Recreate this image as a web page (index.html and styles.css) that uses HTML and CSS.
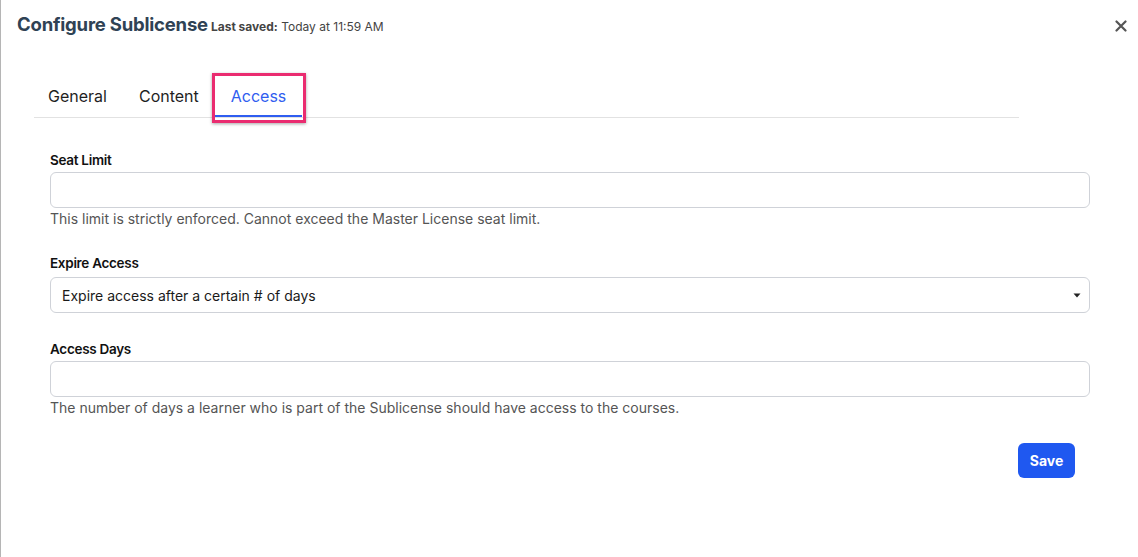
FILE: index.html
```html
<html lang="en">
<head>
  <meta charset="UTF-8" />
  <meta name="viewport" content="width=device-width, initial-scale=1.0"/>
  <title>Configure Sublicense</title>
  <link rel="stylesheet" href="styles.css">
</head>
<body>
  <div class="modal">
    <header class="modal-header">
      <h1>Configure Sublicense</h1>
      <span class="saved"><b>Last saved:</b> Today at 11:59 AM</span>
      <button type="button" class="close-btn" aria-label="Close">
        <svg width="12" height="12" viewBox="0 0 12 12"><path d="M1.5 1.5l9 9M10.5 1.5l-9 9" stroke="#555" stroke-width="2.2" stroke-linecap="round"/></svg>
      </button>
    </header>

    <nav class="tabs">
      <a class="tab">General</a>
      <a class="tab">Content</a>
      <a class="tab active">Access</a>
    </nav>

    <form class="access-form">
      <div class="field">
        <label for="seatLimit">Seat Limit</label>
        <input type="text" id="seatLimit" />
        <p class="help">This limit is strictly enforced. Cannot exceed the Master License seat limit.</p>
      </div>

      <div class="field field-select">
        <label for="expire">Expire Access</label>
        <div class="select">
          <span>Expire access after a certain # of days</span>
          <svg width="8" height="5" viewBox="0 0 8 5"><path d="M0.5 0.5h7L4 4.5z" fill="#222"/></svg>
        </div>
      </div>

      <div class="field">
        <label for="accessDays">Access Days</label>
        <input type="text" id="accessDays" />
        <p class="help">The number of days a learner who is part of the Sublicense should have access to the courses.</p>
      </div>

      <div class="button-row">
        <button type="submit" class="save-btn">Save</button>
      </div>
    </form>
  </div>
</body>
</html>
```

FILE: styles.css
```css
body {
  font-family: 'Inter', 'Liberation Sans', sans-serif;
  margin: 0;
  padding: 0;
  background-color: #fff;
  color: #222;
}

.modal {
  min-height: 557px;
  box-sizing: border-box;
  border-left: 1px solid #b5b5b5;
}

.modal-header {
  display: flex;
  align-items: baseline;
  padding: 13px 0 0 16px;
  position: relative;
}

.modal-header h1 {
  margin: 0;
  font-size: 18.5px;
  line-height: 22px;
  font-weight: 700;
  color: #2f4254;
  letter-spacing: -0.2px;
}

.saved {
  margin-left: 3px;
  font-size: 12px;
  color: #444;
}

.saved b {
  font-weight: 700;
}

.close-btn {
  position: absolute;
  right: 11px;
  top: 20px;
  border: none;
  background: none;
  padding: 0;
  cursor: pointer;
}

.tabs {
  display: flex;
  margin: 41px 0 0 33px;
  width: 985px;
  border-bottom: 1px solid #e2e2e2;
}

.tab {
  font-size: 16px;
  line-height: 22px;
  padding: 9px 16px 8px;
  color: #1f1f1f;
  cursor: pointer;
  border-bottom: 2px solid transparent;
}

.tab:first-child {
  margin-left: -2px;
}

.tab.active {
  color: #2f5df0;
  border-bottom-color: #2f5df0;
  position: relative;
}

.tab.active::after {
  content: "";
  position: absolute;
  left: -3px;
  right: -4px;
  top: -3px;
  bottom: -8px;
  border: 3px solid #ea2c70;
  box-shadow: 0 1px 3px rgba(0, 0, 0, 0.35);
}

.access-form {
  padding: 33px 48px 0 49px;
}

.field {
  margin-bottom: 26px;
}

.field-select {
  margin-bottom: 27px;
}

label {
  display: block;
  font-size: 13.5px;
  line-height: 18px;
  font-weight: 600;
  color: #111;
  letter-spacing: -0.3px;
  margin-bottom: 3px;
}

input, .select {
  display: block;
  width: 100%;
  height: 36px;
  box-sizing: border-box;
  border: 1px solid #cfd2d8;
  border-radius: 6px;
  font-family: inherit;
  font-size: 14px;
}

.select {
  display: flex;
  align-items: center;
  justify-content: space-between;
  padding: 0 8px 0 11px;
  margin-top: 5px;
  color: #1a1a1a;
}

.help {
  margin: 2px 0 0;
  font-size: 14px;
  line-height: 18px;
  color: #555;
}

.button-row {
  display: flex;
  justify-content: flex-end;
  padding-right: 15px;
}

.save-btn {
  background-color: #1f58f0;
  color: white;
  border: none;
  border-radius: 6px;
  font-family: inherit;
  font-weight: 700;
  font-size: 14px;
  width: 57px;
  height: 35px;
  cursor: pointer;
}
```
